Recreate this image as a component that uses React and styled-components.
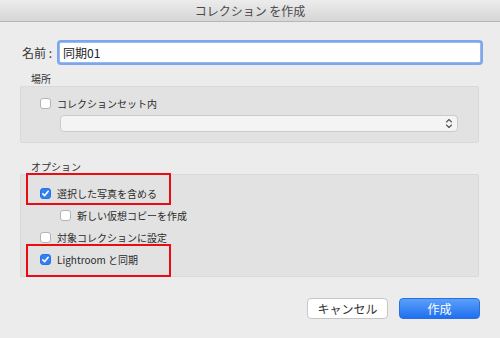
import React from 'react';
import styled, { createGlobalStyle } from 'styled-components';

const GlobalStyle = createGlobalStyle`
  body {
    margin: 0;
    background: #ececec;
    font-family: "Noto Sans CJK JP", "Noto Sans", sans-serif;
    color: #2b2b2b;
  }
`;

const Window = styled.div`
  width: 500px;
  height: 338px;
  background: #ececec;
  display: flex;
  flex-direction: column;
  overflow: hidden;
`;

const TitleBar = styled.div`
  height: 21px;
  flex: none;
  display: flex;
  align-items: center;
  justify-content: center;
  font-size: 12px;
  color: #4a4a4a;
  background: linear-gradient(#ececec, #d6d6d6);
  border-bottom: 1px solid #b6b6b6;
  white-space: pre;
`;

const Body = styled.div`
  display: flex;
  flex-direction: column;
  padding: 18px 19px 0 20px;
`;

const NameRow = styled.div`
  display: flex;
  align-items: center;
  height: 25px;
`;

const NameLabel = styled.label`
  font-size: 12px;
  padding-left: 2px;
  width: 35px;
  color: #333;
  white-space: pre;
`;

const NameInput = styled.div`
  flex: 1;
  height: 19px;
  margin-left: 2px;
  background: #fff;
  border: 1px solid #9ab8ea;
  box-shadow: 0 0 0 2px #7ca7ee;
  border-radius: 2px;
  display: flex;
  align-items: center;
  padding-left: 3px;
  font-size: 12px;
  color: #222;
`;

const SectionLabel = styled.div`
  font-size: 10px;
  color: #333;
  padding-left: 11px;
  height: 13px;
  line-height: 13px;
  margin-top: ${p => p.$top}px;
  margin-bottom: ${p => p.$bottom}px;
`;

const Group = styled.div`
  width: 459px;
  height: ${p => p.$h}px;
  box-sizing: border-box;
  background: #e2e2e2;
  border: 1px solid #d9d9d9;
  border-radius: 2px;
  padding: ${p => p.$pt}px 0 0 19px;
  display: flex;
  flex-direction: column;
`;

const Row = styled.div`
  position: relative;
  display: flex;
  align-items: center;
  gap: 6px;
  height: 22px;
  margin-left: ${p => p.$indent || 0}px;
  font-size: 10px;
  color: #2b2b2b;
  white-space: pre;

  ${p => p.$mark && `
    &::after {
      content: '';
      position: absolute;
      left: -14px;
      width: 141px;
      top: ${p.$mark[0]}px;
      bottom: ${p.$mark[1]}px;
      border: 2px solid #ec0b10;
    }
  `}
`;

const Box = styled.span`
  width: 11px;
  height: 11px;
  box-sizing: border-box;
  border-radius: 3px;
  flex: none;
  display: flex;
  align-items: center;
  justify-content: center;
  background: ${p => (p.$on ? '#2f7ff5' : '#fff')};
  border: 1px solid ${p => (p.$on ? '#2a72de' : '#b4b4b4')};
`;

const Select = styled.div`
  margin: 1px 0 0 20px;
  width: 398px;
  height: 17px;
  box-sizing: border-box;
  background: #f4f4f4;
  border: 1px solid #cbcbcb;
  border-radius: 4px;
  display: flex;
  align-items: center;
  justify-content: flex-end;
  padding-right: 4px;
`;

const Footer = styled.div`
  display: flex;
  justify-content: flex-end;
  gap: 11px;
  margin-top: 21px;
  padding-right: 1px;
`;

const Button = styled.button`
  width: 81px;
  height: 21px;
  border-radius: 4px;
  font-family: inherit;
  font-size: 12px;
  padding: 0;
  display: flex;
  align-items: center;
  justify-content: center;
  color: ${p => (p.$primary ? '#fff' : '#333')};
  background: ${p => (p.$primary ? 'linear-gradient(#5aa0fa, #1f6ff0)' : '#fff')};
  border: 1px solid ${p => (p.$primary ? '#2a6fe0' : '#c6c6c6')};
`;

const Check = ({ on }) => (
  <Box $on={on}>
    {on && (
      <svg width="9" height="9" viewBox="0 0 9 9">
        <path d="M1.8 4.8 L3.7 6.6 L7.2 2.3" fill="none" stroke="#fff" strokeWidth="1.6" strokeLinecap="round" strokeLinejoin="round" />
      </svg>
    )}
  </Box>
);

const Stepper = () => (
  <svg width="8" height="11" viewBox="0 0 8 11">
    <path d="M1.5 4 L4 1.5 L6.5 4 M1.5 7 L4 9.5 L6.5 7" fill="none" stroke="#555" strokeWidth="1.1" strokeLinecap="round" strokeLinejoin="round" />
  </svg>
);

export default function App() {
  return (
    <>
      <GlobalStyle />
      <Window>
        <TitleBar>コレクション を作成</TitleBar>
        <Body>
          <NameRow>
            <NameLabel>名前 :</NameLabel>
            <NameInput>同期01</NameInput>
          </NameRow>

          <SectionLabel $top={7} $bottom={1}>場所</SectionLabel>
          <Group $h={57} $pt={5}>
            <Row>
              <Check />
              コレクションセット内
            </Row>
            <Select>
              <Stepper />
            </Select>
          </Group>

          <SectionLabel $top={17} $bottom={1}>オプション</SectionLabel>
          <Group $h={103} $pt={7}>
            <Row $mark={[-9, -1]}>
              <Check on />
              選択した写真を含める
            </Row>
            <Row $indent={20}>
              <Check />
              新しい仮想コピーを作成
            </Row>
            <Row>
              <Check />
              対象コレクションに設定
            </Row>
            <Row $mark={[-4, -7]}>
              <Check on />
              Lightroom と同期
            </Row>
          </Group>

          <Footer>
            <Button>キャンセル</Button>
            <Button $primary>作成</Button>
          </Footer>
        </Body>
      </Window>
    </>
  );
}
